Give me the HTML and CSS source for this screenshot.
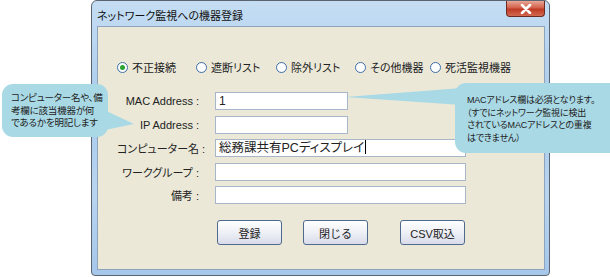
FILE: index.html
```html
<!DOCTYPE html>
<html>
<head>
    <title>ネットワーク監視への機器登録</title>
    <link rel="stylesheet" href="styles.css">
</head>
<body>
    <div class="window">
        <div class="titlebar">
            <span class="title">ネットワーク監視への機器登録</span>
            <span class="close-btn">
                <svg width="14" height="10" viewBox="0 0 14 10"><path d="M3 1 L11 9 M11 1 L3 9" stroke="#fff" stroke-width="2.6" stroke-linecap="round"/></svg>
            </span>
        </div>
        <div class="client">
            <div class="radio-row">
                <label class="radio-item w1"><span class="radio checked"></span>不正接続</label>
                <label class="radio-item w2"><span class="radio"></span>遮断リスト</label>
                <label class="radio-item w3"><span class="radio"></span>除外リスト</label>
                <label class="radio-item w4"><span class="radio"></span>その他機器</label>
                <label class="radio-item"><span class="radio"></span>死活監視機器</label>
            </div>

            <div class="form-grid">
                <span class="field-label">MAC Address :</span>
                <div class="field short">1</div>
                <span class="field-label">IP Address :</span>
                <div class="field short"></div>
                <span class="field-label">コンピューター名 :</span>
                <div class="field long big">総務課共有PCディスプレイ<span class="caret"></span></div>
                <span class="field-label">ワークグループ :</span>
                <div class="field long"></div>
                <span class="field-label">備考 :</span>
                <div class="field long"></div>
            </div>

            <div class="button-row">
                <button class="win-btn">登録</button>
                <button class="win-btn">閉じる</button>
                <button class="win-btn">CSV取込</button>
            </div>
        </div>
    </div>

    <!-- callouts over the dialog -->
    <svg class="tails" width="610" height="277" viewBox="0 0 610 277">
        <polygon points="100,108 134,124 100,131" fill="#a9d9e5"/>
        <polygon points="345,97 462,88 462,105" fill="#a9d9e5"/>
    </svg>
    <div class="callout callout-left">コンピューター名や、備<br>考欄に該当機器が何<br>であるかを明記します</div>
    <div class="callout callout-right">MACアドレス欄は必須となります。<br>（すでにネットワーク監視に検出<br>されているMACアドレスとの重複<br>はできません）</div>
</body>
</html>
```

FILE: styles.css
```css
body {
    margin: 0;
    background-color: #fff;
    font-family: 'Liberation Sans', 'Noto Sans CJK JP', sans-serif;
    color: #222;
    position: relative;
    width: 610px;
    height: 277px;
    overflow: hidden;
}
.window {
    margin-left: 91px;
    width: 459px;
    height: 276px;
    box-sizing: border-box;
    border: 1px solid #5b6470;
    border-radius: 6px 6px 4px 4px;
    background: linear-gradient(180deg, #c4ddf3 0%, #a9cbec 40%, #b8d5f0 70%, #a5c7ea 100%);
    display: flex;
    flex-direction: column;
}
.titlebar {
    height: 24px;
    display: flex;
    align-items: center;
    justify-content: space-between;
    padding-left: 5px;
    position: relative;
}
.title {
    font-size: 11px;
    color: #111;
    font-feature-settings: "palt";
    margin-top: 4px;
}
.close-btn {
    align-self: flex-start;
    margin-right: 4px;
    width: 39px;
    height: 16px;
    box-sizing: border-box;
    border: 1px solid #6d2a22;
    border-top: none;
    border-radius: 0 0 4px 4px;
    background: linear-gradient(180deg, #e9a797 0%, #d2614b 45%, #bf3a25 55%, #d26a50 100%);
    display: flex;
    align-items: center;
    justify-content: center;
}
.client {
    flex: 1;
    margin: 1px 4px 5px 5px;
    border: 1px solid #8ea4bd;
    background-color: #ebe8d8;
    padding: 0 0 0 19px;
}
.radio-row {
    display: flex;
    align-items: center;
    margin-top: 32px;
    font-size: 11px;
}
.radio-item {
    display: flex;
    align-items: center;
    gap: 4px;
    font-feature-settings: "palt";
}
.w1 { width: 79px; }
.w2 { width: 80px; }
.w3 { width: 79px; }
.w4 { width: 75px; }
.radio {
    width: 9px;
    height: 9px;
    border: 1px solid #3d6da4;
    border-radius: 50%;
    background: #fff;
    position: relative;
}
.radio.checked::after {
    content: '';
    position: absolute;
    left: 2px;
    top: 2px;
    width: 5px;
    height: 5px;
    border-radius: 50%;
    background: #2aa432;
}
.form-grid {
    display: grid;
    grid-template-columns: 82px auto;
    column-gap: 16px;
    row-gap: 5.5px;
    margin-top: 17px;
    align-items: center;
    justify-content: start;
}
.field-label {
    text-align: right;
    font-size: 11px;
    white-space: nowrap;
    font-feature-settings: "palt";
}
.field {
    height: 18px;
    box-sizing: border-box;
    border: 1px solid #a7b7c9;
    background: #fff;
    font-size: 12px;
    line-height: 16px;
    padding-left: 3px;
}
.field.short { width: 133px; }
.field.long { width: 251px; }
.field.big {
    font-size: 12.5px;
    font-feature-settings: "palt";
}
.caret {
    display: inline-block;
    width: 1px;
    height: 14px;
    background: #000;
    vertical-align: -2px;
    margin-left: 1px;
}
.button-row {
    display: flex;
    gap: 21px;
    margin-top: 16px;
    margin-left: 100px;
}
.win-btn {
    width: 65px;
    height: 25px;
    border: 1px solid #4f6a8f;
    border-radius: 3px;
    background: linear-gradient(180deg, #ffffff 0%, #eef0f6 50%, #d9dce9 100%);
    font-family: 'Liberation Sans', 'Noto Sans CJK JP', sans-serif;
    font-size: 11px;
    color: #222;
    padding: 0;
}
.win-btn + .win-btn + .win-btn {
    margin-left: 11px;
}
.tails {
    position: absolute;
    left: 0;
    top: 0;
}
.callout {
    position: absolute;
    background-color: #a9d9e5;
    border-radius: 11px;
    color: #222;
    font-size: 9px;
    line-height: 12.5px;
    letter-spacing: -0.2px;
    white-space: nowrap;
    font-feature-settings: "palt";
    box-sizing: border-box;
}
.callout-left {
    left: 2px;
    top: 84px;
    width: 106px;
    height: 53px;
    padding: 8px 0 0 9px;
    font-size: 9.5px;
}
.callout-right {
    left: 455px;
    top: 83px;
    width: 165px;
    height: 70px;
    padding: 11px 0 0 12px;
}
```
